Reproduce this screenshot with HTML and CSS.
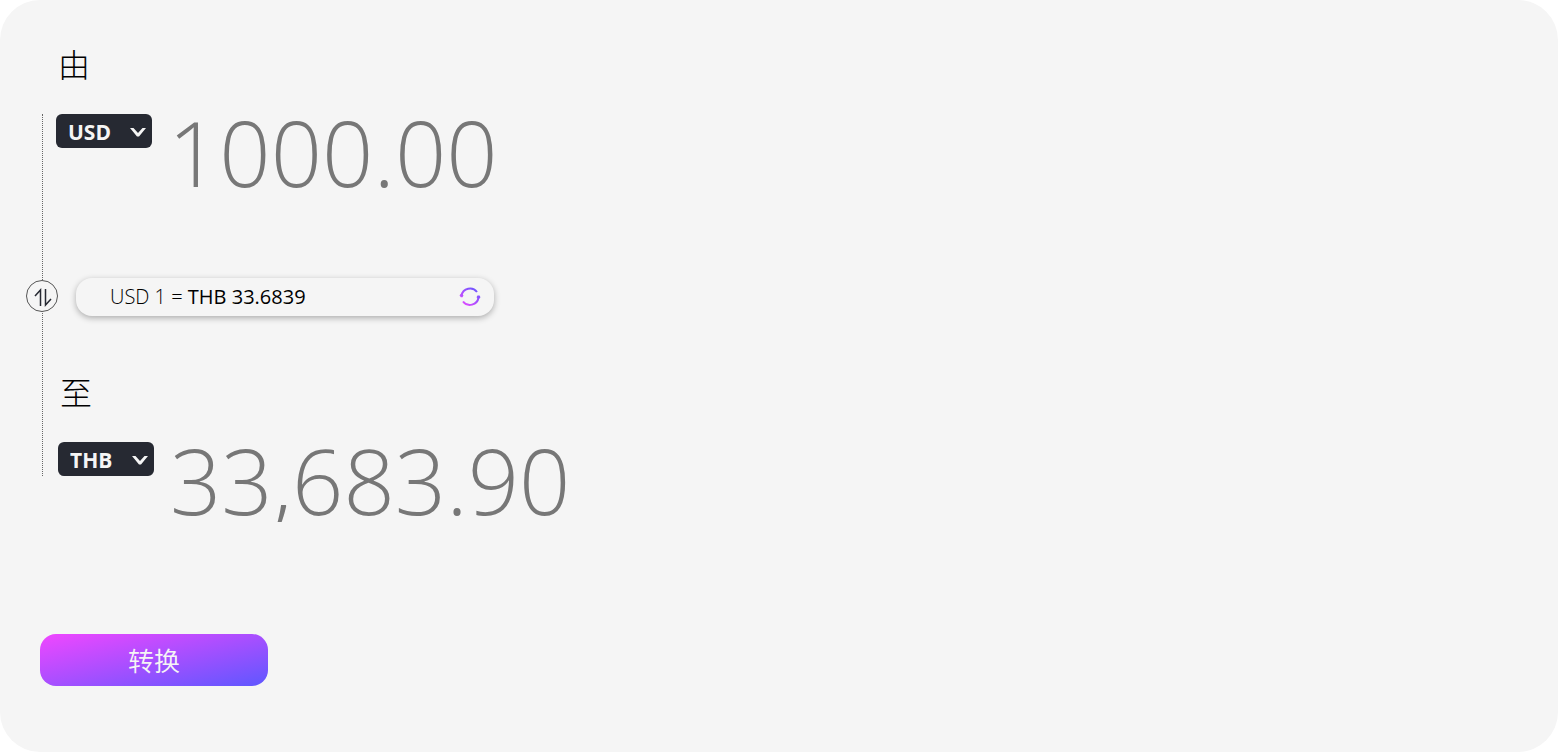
FILE: index.html
```html
<!DOCTYPE html>
<html lang="zh-CN">

<head>
    <meta charset="UTF-8">
    <meta name="viewport" content="width=device-width, initial-scale=1.0">
    <title>货币转换</title>
    <link rel="stylesheet" href="styles.css">
</head>

<body>
    <form class="converter">
        <label class="label" for="fromAmount">由</label>
        <div class="track">
            <div class="amount-row">
                <div class="currency">
                    <select id="fromCurrency" aria-label="由 货币">
                        <option selected>USD</option>
                        <option>THB</option>
                    </select>
                    <svg class="chevron" viewBox="0 0 16 10" aria-hidden="true">
                        <path d="M0 1 H3.500 L8 6 L12.500 1 H16 L9 9.500 H7 Z" />
                    </svg>
                </div>
                <input type="text" class="amount" id="fromAmount" value="1000.00">
            </div>

            <div class="rate-row">
                <button type="button" class="swap" aria-label="swap">
                    <svg viewBox="0 0 30 30" aria-hidden="true">
                        <path d="M8 15 L13.500 9 V25 M18.500 8 V24 L24 18" />
                    </svg>
                </button>
                <div class="rate">
                    <p>USD 1 = <strong>THB 33.6839</strong></p>
                    <button type="button" class="refresh" aria-label="refresh">
                        <svg viewBox="0 0 22 22" aria-hidden="true">
                            <defs>
                                <linearGradient id="refreshGradient" gradientUnits="userSpaceOnUse" x1="4" y1="20" x2="17" y2="2">
                                    <stop offset="0" stop-color="#e64aff" />
                                    <stop offset="1" stop-color="#6a55ff" />
                                </linearGradient>
                            </defs>
                            <path d="M2.500 9.500 A8.700 8.700 0 0 1 18 6 M19.500 11.500 A8.700 8.700 0 0 1 4 15.500" fill="none" stroke="url(#refreshGradient)" stroke-width="2" />
                            <path d="M0.500 9.300 L2.300 7.500 L4.500 9.300 L3.500 11.300 H1.800 Z M21.500 11.300 L19.700 13.300 L17.500 11.300 L18.500 9.500 H20.500 Z" fill="url(#refreshGradient)" />
                        </svg>
                    </button>
                </div>
            </div>

            <label class="label label-to" for="toAmount">至</label>
            <div class="amount-row amount-row-to">
                <div class="currency">
                    <select id="toCurrency" aria-label="至 货币">
                        <option>USD</option>
                        <option selected>THB</option>
                    </select>
                    <svg class="chevron" viewBox="0 0 16 10" aria-hidden="true">
                        <path d="M0 1 H3.500 L8 6 L12.500 1 H16 L9 9.500 H7 Z" />
                    </svg>
                </div>
                <input type="text" class="amount" id="toAmount" value="33,683.90" readonly>
            </div>
        </div>
        <button type="submit" class="convert">转换</button>
    </form>
</body>

</html>
```

FILE: styles.css
```css
* {
    box-sizing: border-box;
}

body {
    margin: 0;
    background: #fff;
    font-family: "Open Sans", "Noto Sans CJK SC", sans-serif;
    font-weight: 300;
}

.converter {
    min-height: 100vh;
    padding: 41px 40px 66px;
    border-radius: 40px;
    background: #f5f5f5;
}

.label {
    display: block;
    margin-left: 18px;
    color: #000;
    font-size: 32px;
    line-height: 48px;
}

.track {
    position: relative;
    margin-top: 25px;
    padding-left: 2px;
}

/* dotted line that joins both currencies */
.track::before {
    content: '';
    position: absolute;
    top: 0;
    bottom: 46px;
    left: 2px;
    border-left: 1px dotted #666;
}

.amount-row {
    display: flex;
    align-items: flex-start;
    gap: 16px;
    margin-left: 14px;
}

.amount-row-to {
    margin-left: 16px;
}

.currency {
    position: relative;
    flex: none;
}

.currency select {
    display: block;
    width: 96px;
    height: 34px;
    padding: 2px 12px 0;
    border: 0;
    border-radius: 6px;
    background: #262932;
    color: #f5f5f5;
    font: 700 21px/32px "Open Sans", sans-serif;
    appearance: none;
    cursor: pointer;
}

.chevron {
    position: absolute;
    top: 13px;
    right: 6px;
    width: 16px;
    height: 10px;
    fill: #f5f5f5;
    pointer-events: none;
}

.amount {
    flex: 1;
    min-width: 0;
    height: 80px;
    padding: 0 0 4px;
    border: 0;
    background: none;
    color: #777;
    font: 300 90px/76px "Open Sans", sans-serif;
    outline: none;
}

.rate-row {
    display: flex;
    align-items: flex-end;
    gap: 18px;
    margin: 84px 0 53px -16px;
}

.swap {
    position: relative;
    flex: none;
    width: 32px;
    height: 32px;
    margin-bottom: 4px;
    padding: 0;
    border: 1px solid #555;
    border-radius: 50%;
    background: #f5f5f5;
    cursor: pointer;
}

.swap svg {
    display: block;
    width: 30px;
    height: 30px;
    fill: none;
    stroke: #262932;
    stroke-width: 1.5;
}

.rate {
    display: flex;
    align-items: center;
    justify-content: space-between;
    width: 100%;
    max-width: 418px;
    height: 38px;
    padding: 0 13px 0 34px;
    border-radius: 16px;
    background: #f5f5f5;
    box-shadow: 0 2px 6px rgba(0, 0, 0, .3);
    color: #000;
    font-size: 20px;
}

.rate p {
    margin: 0;
    padding-bottom: 2px;
}

.rate strong {
    font-weight: 400;
}

.refresh {
    width: 22px;
    height: 22px;
    padding: 0;
    border: 0;
    background: none;
    cursor: pointer;
}

.refresh svg {
    display: block;
}

.label-to {
    margin-bottom: 25px;
}

.convert {
    display: block;
    width: 228px;
    height: 52px;
    margin-top: 112px;
    padding: 0 0 2px;
    border: 0;
    border-radius: 16px;
    background: linear-gradient(to bottom right, #f047ff, #5f57ff);
    color: #f5f5f5;
    font: 350 26px "Noto Sans CJK SC", sans-serif;
    cursor: pointer;
}
```
